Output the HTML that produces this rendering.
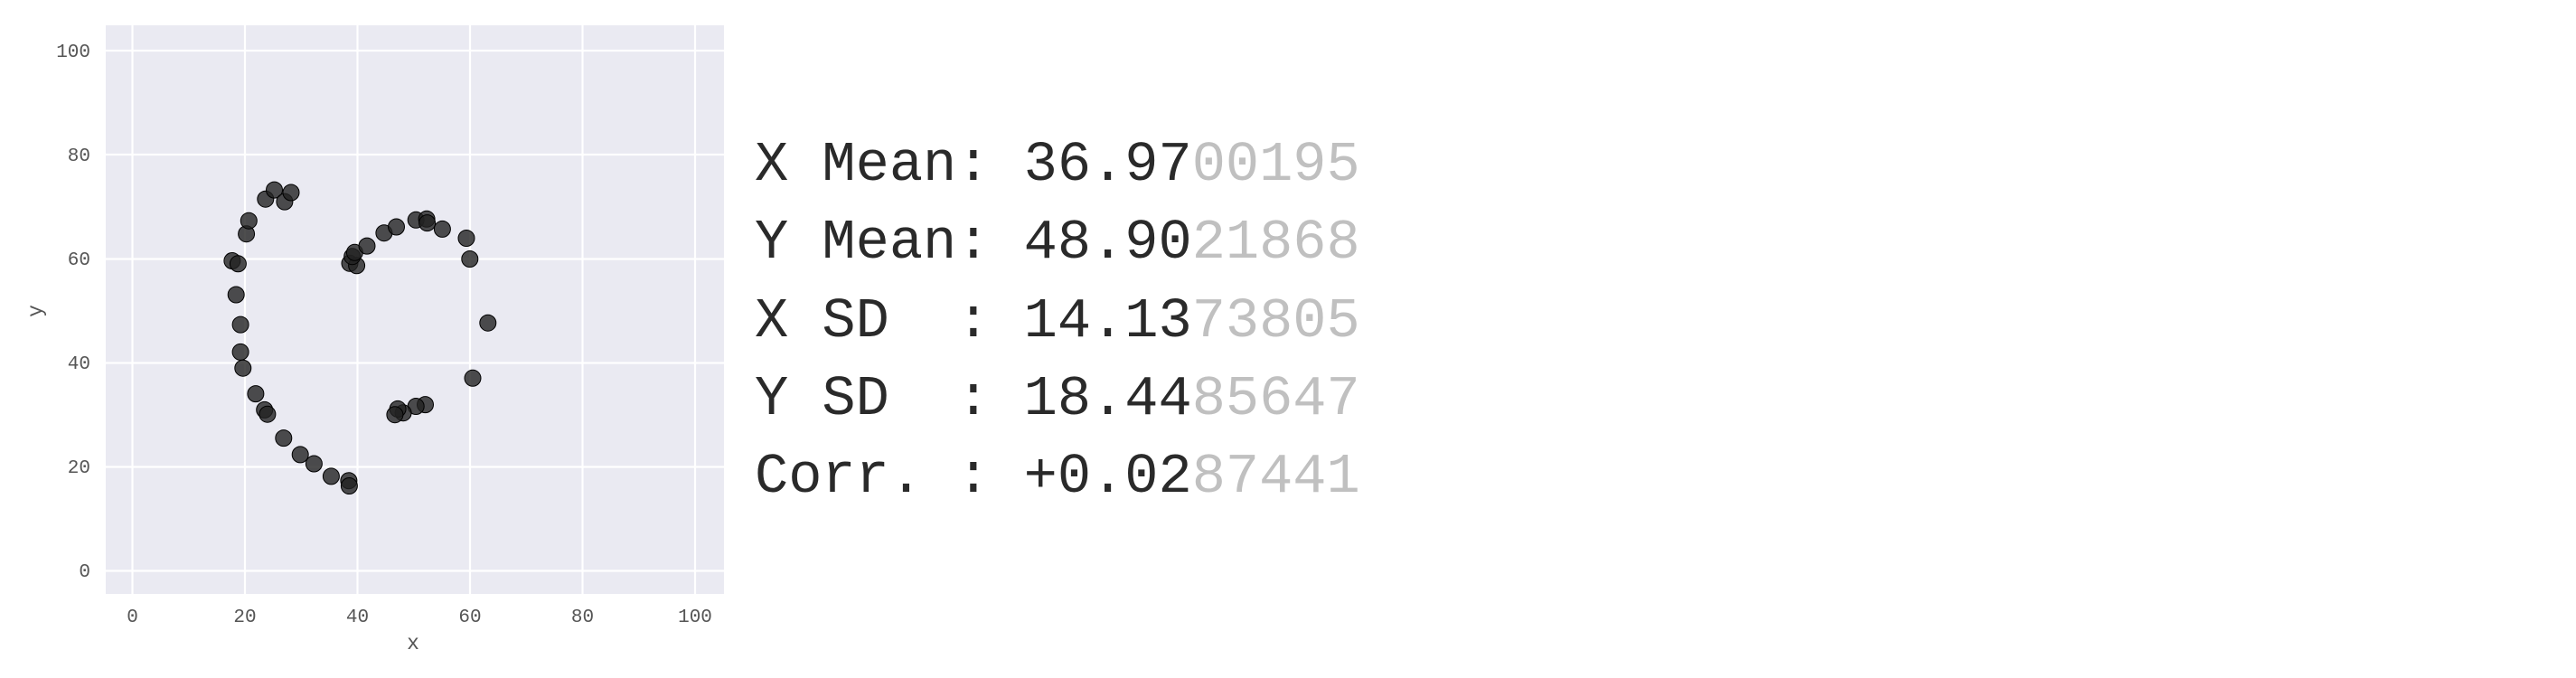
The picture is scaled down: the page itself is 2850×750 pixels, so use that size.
<!DOCTYPE html>
<html><head><style>
html,body{margin:0;padding:0;background:#fff;width:2850px;height:750px;overflow:hidden}
.t{position:absolute;left:835px;font-family:"Liberation Mono",monospace;font-size:62px;color:#2a2a2a;white-space:pre;line-height:1}
.t span{color:#c0c0c0}
</style></head><body>
<svg width="2850" height="750" style="position:absolute;left:0;top:0" font-family="Liberation Mono, monospace">
<rect x="117" y="28" width="684" height="629" fill="#eaeaf2"/>
<g stroke="#fff" stroke-width="2.2">
<line x1="146.5" y1="28" x2="146.5" y2="657"/>
<line x1="271" y1="28" x2="271" y2="657"/>
<line x1="395.5" y1="28" x2="395.5" y2="657"/>
<line x1="520" y1="28" x2="520" y2="657"/>
<line x1="644.5" y1="28" x2="644.5" y2="657"/>
<line x1="769" y1="28" x2="769" y2="657"/>
<line x1="117" y1="56" x2="801" y2="56"/>
<line x1="117" y1="171" x2="801" y2="171"/>
<line x1="117" y1="286.5" x2="801" y2="286.5"/>
<line x1="117" y1="401.5" x2="801" y2="401.5"/>
<line x1="117" y1="516.5" x2="801" y2="516.5"/>
<line x1="117" y1="631.5" x2="801" y2="631.5"/>
</g>
<g fill="#555" font-size="21" text-anchor="end">
<text x="100" y="63">100</text><text x="100" y="178">80</text><text x="100" y="293">60</text>
<text x="100" y="408">40</text><text x="100" y="523">20</text><text x="100" y="638">0</text>
</g>
<g fill="#555" font-size="21" text-anchor="middle">
<text x="146.5" y="688">0</text><text x="271" y="688">20</text><text x="395.5" y="688">40</text>
<text x="520" y="688">60</text><text x="644.5" y="688">80</text><text x="769" y="688">100</text>
<text x="457" y="718" font-size="23">x</text>
<text transform="translate(46,344) rotate(-90)" font-size="23">y</text>
</g>
<g fill="#222" fill-opacity="0.8" stroke="#000" stroke-width="1">
<circle cx="256.9" cy="288.5" r="9"/><circle cx="263.4" cy="291.8" r="9"/><circle cx="261.2" cy="326" r="9"/>
<circle cx="266.1" cy="359.1" r="9"/><circle cx="266.1" cy="389.4" r="9"/><circle cx="268.8" cy="407.2" r="9"/>
<circle cx="282.9" cy="435.6" r="9"/><circle cx="292.7" cy="453.4" r="9"/><circle cx="295.9" cy="458.2" r="9"/>
<circle cx="313.8" cy="484.6" r="9"/><circle cx="332.2" cy="502.9" r="9"/><circle cx="347.4" cy="513" r="9"/>
<circle cx="366.4" cy="526.9" r="9"/><circle cx="385.9" cy="531.7" r="9"/><circle cx="386.4" cy="537.5" r="9"/>
<circle cx="272.6" cy="258.7" r="9"/><circle cx="275.3" cy="244.2" r="9"/><circle cx="293.8" cy="220.2" r="9"/>
<circle cx="303.5" cy="210.1" r="9"/><circle cx="314.9" cy="223.1" r="9"/><circle cx="322" cy="213" r="9"/>
<circle cx="387" cy="291.3" r="9"/><circle cx="394.6" cy="293.8" r="9"/><circle cx="389.7" cy="283.7" r="9"/>
<circle cx="392.4" cy="279.3" r="9"/><circle cx="406" cy="272.1" r="9"/><circle cx="424.9" cy="257.7" r="9"/>
<circle cx="438.5" cy="251" r="9"/><circle cx="460.2" cy="243.3" r="9"/><circle cx="472.1" cy="242.3" r="9"/>
<circle cx="472.6" cy="246.6" r="9"/><circle cx="489.4" cy="253.4" r="9"/><circle cx="516" cy="263.5" r="9"/>
<circle cx="519.8" cy="286.5" r="9"/><circle cx="539.8" cy="357.2" r="9"/><circle cx="523" cy="418.3" r="9"/>
<circle cx="470.5" cy="447.6" r="9"/><circle cx="460.2" cy="449.5" r="9"/><circle cx="446.1" cy="456.7" r="9"/>
<circle cx="440.1" cy="452.4" r="9"/><circle cx="436.9" cy="458.7" r="9"/>
</g>
</svg>
<div class="t" style="top:152px">X Mean: 36.97<span>00195</span></div>
<div class="t" style="top:238px">Y Mean: 48.90<span>21868</span></div>
<div class="t" style="top:325px">X SD  : 14.13<span>73805</span></div>
<div class="t" style="top:411px">Y SD  : 18.44<span>85647</span></div>
<div class="t" style="top:497px">Corr. : +0.02<span>87441</span></div>
</body></html>
